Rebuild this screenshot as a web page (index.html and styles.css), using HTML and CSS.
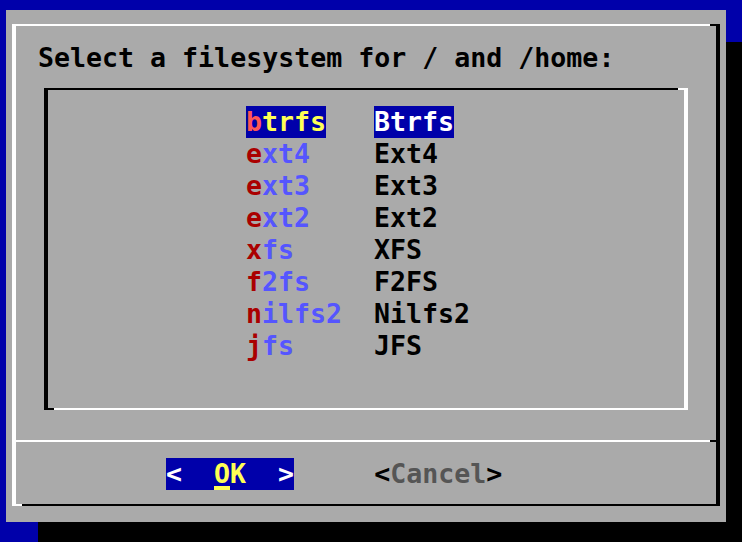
FILE: index.html
```html
<!DOCTYPE html>
<html lang="en">
<head>
<meta charset="utf-8">
<title>Select a filesystem</title>
<link rel="stylesheet" href="styles.css">
</head>
<body>
<div class="screen">
  <div class="dialog">
    <div class="frame">
      <div class="prompt">Select a filesystem for / and /home:</div>
      <div class="listbox">
        <ul class="menu">
          <li class="item sel"><span class="tag"><span class="hot">b</span>trfs</span><span class="desc">Btrfs</span></li>
          <li class="item"><span class="tag"><span class="hot">e</span>xt4</span><span class="desc">Ext4</span></li>
          <li class="item"><span class="tag"><span class="hot">e</span>xt3</span><span class="desc">Ext3</span></li>
          <li class="item"><span class="tag"><span class="hot">e</span>xt2</span><span class="desc">Ext2</span></li>
          <li class="item"><span class="tag"><span class="hot">x</span>fs</span><span class="desc">XFS</span></li>
          <li class="item"><span class="tag"><span class="hot">f</span>2fs</span><span class="desc">F2FS</span></li>
          <li class="item"><span class="tag"><span class="hot">n</span>ilfs2</span><span class="desc">Nilfs2</span></li>
          <li class="item"><span class="tag"><span class="hot">j</span>fs</span><span class="desc">JFS</span></li>
        </ul>
      </div>
      <div class="sep"></div>
      <div class="buttons">
        <span class="btn active"><span class="br">&lt;</span>  <span class="cur">O</span>K  <span class="br">&gt;</span></span>
        <span class="btn"><span class="br">&lt;</span><span class="lbl">Cancel</span><span class="br">&gt;</span></span>
      </div>
    </div>
  </div>
</div>
</body>
</html>
```

FILE: styles.css
```css
html, body {
  margin: 0;
  padding: 0;
  background: #0000aa;
  overflow: hidden;
  width: 742px;
  height: 542px;
}

.screen {
  padding: 10px 0 0 6px;
  font-family: "DejaVu Sans Mono", "Liberation Mono", monospace;
  font-weight: bold;
  font-size: 26.6px;
  line-height: 32px;
  color: #000;
}

.dialog {
  box-sizing: border-box;
  width: 720px;
  height: 512px;
  background: #aaaaaa;
  box-shadow: 32px 32px 0 #000;
  padding: 14px 6px 16px 6px;
}

.frame {
  position: relative;
  border-top: 2px solid #fff;
  border-left: 4px solid #fff;
  border-right: 4px solid #000;
  border-bottom: 2px solid #000;
  padding: 16px 0 14px 0;
}

.frame::before {
  content: "";
  position: absolute;
  top: -2px;
  right: -4px;
  width: 10px;
  height: 2px;
  background: #000;
}

.frame::after {
  content: "";
  position: absolute;
  bottom: -2px;
  left: -4px;
  width: 10px;
  height: 2px;
  background: #fff;
}

.prompt {
  height: 32px;
  padding-left: 22px;
  white-space: pre;
}

.listbox {
  position: relative;
  box-sizing: border-box;
  margin: 14px 0 0 28px;
  width: 644px;
  height: 322px;
  border-top: 2px solid #000;
  border-left: 4px solid #000;
  border-right: 4px solid #fff;
  border-bottom: 2px solid #fff;
  padding-top: 16px;
}

.listbox::before {
  content: "";
  position: absolute;
  top: -2px;
  right: -4px;
  width: 10px;
  height: 2px;
  background: #fff;
}

.listbox::after {
  content: "";
  position: absolute;
  bottom: -2px;
  left: -4px;
  width: 10px;
  height: 2px;
  background: #000;
}

.menu {
  list-style: none;
  margin: 0;
  padding: 0 0 0 198px;
}

.item {
  display: grid;
  grid-template-columns: 128px auto;
  height: 32px;
  white-space: pre;
}

.tag, .desc {
  justify-self: start;
  height: 32px;
}

.tag {
  color: #5555ff;
}

.tag .hot {
  color: #aa0000;
}

.desc {
  color: #000;
}

.item.sel .tag {
  background: #0000aa;
  color: #ffff55;
}

.item.sel .tag .hot {
  color: #ff5555;
}

.item.sel .desc {
  background: #0000aa;
  color: #fff;
}

.sep {
  margin-top: 30px;
  height: 2px;
  background: linear-gradient(to right, #fff calc(100% - 6px), #000 calc(100% - 6px));
}

.buttons {
  display: flex;
  gap: 80px;
  margin-top: 16px;
  height: 32px;
  padding-left: 150px;
  white-space: pre;
}

.btn {
  display: inline-block;
  height: 32px;
  color: #000;
}

.btn .lbl {
  color: #555555;
}

.btn.active {
  background: #0000aa;
  color: #ffff55;
}

.btn.active .br {
  color: #fff;
}

.cur {
  display: inline-block;
  height: 32px;
  background: linear-gradient(#ffff55, #ffff55) bottom / 100% 4px no-repeat;
}
```
